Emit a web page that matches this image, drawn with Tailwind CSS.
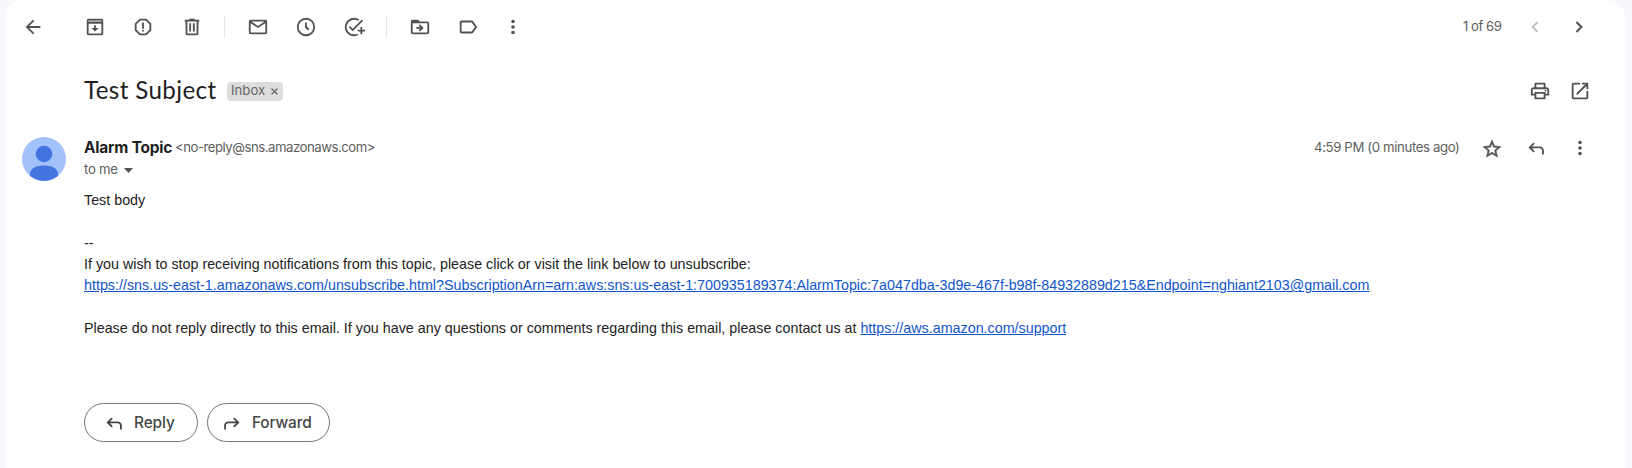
<!DOCTYPE html>
<html lang="en">
<head>
<meta charset="utf-8">
<title>Test Subject</title>
<script src="https://cdn.jsdelivr.net/npm/@tailwindcss/browser@4"></script>
</head>
<body class="bg-[#f6f8fc] h-[468px] overflow-hidden pl-[5px] pr-[7px] font-['Inter',sans-serif] text-[#5e5e5e]">
<main class="h-[468px] bg-white rounded-t-[18px] flex flex-col">
  <header class="h-[54px] shrink-0 flex items-center pl-[17px] pr-[35px] text-[#505351]">
    <svg class="size-[22px]" viewBox="0 0 24 24" fill="currentColor"><path d="M20 11H7.83l5.59-5.59L12 4l-8 8 8 8 1.41-1.41L7.83 13H20z"/></svg>
    <svg class="size-[22px] ml-[40px]" viewBox="0 0 24 24" fill="currentColor"><path d="M19 3H5a2 2 0 0 0-2 2v14a2 2 0 0 0 2 2h14a2 2 0 0 0 2-2V5a2 2 0 0 0-2-2zm0 2v1.500H5V5zM5 19V8.500h14V19z"/><path d="M5 5h14v2H5z" opacity=".5"/><path d="M13 10h-2v3H8l4 4 4-4h-3z"/></svg>
    <svg class="size-[22px] ml-[26px]" viewBox="0 0 24 24" fill="currentColor"><path d="M15.730 3H8.270L3 8.270v7.460L8.270 21h7.460L21 15.730V8.270zM19 14.900 14.900 19H9.100L5 14.900V9.100L9.100 5h5.800L19 9.100z"/><circle cx="12" cy="16" r="1.100"/><path d="M11 7h2v7h-2z"/></svg>
    <svg class="size-[22px] ml-[27px]" viewBox="0 0 24 24" fill="currentColor"><path d="M15 4V3H9v1H4v2h1v13a2 2 0 0 0 2 2h10a2 2 0 0 0 2-2V6h1V4zm2 15H7V6h10z"/><path d="M9 8h2v9H9zm4 0h2v9h-2z"/></svg>
    <span class="w-px h-[22px] ml-[21px] bg-[#e3e5ea]"></span>
    <svg class="size-[22px] ml-[22px]" viewBox="0 0 24 24" fill="currentColor"><path d="M20 4H4a2 2 0 0 0-2 2v12a2 2 0 0 0 2 2h16a2 2 0 0 0 2-2V6a2 2 0 0 0-2-2zm-.800 2L12 10.800 4.800 6zM4 18V7.870l8 5.330 8-5.330V18z"/></svg>
    <svg class="size-[22px] ml-[26px]" viewBox="0 0 24 24" fill="currentColor"><path d="M12 2a10 10 0 1 0 0 20 10 10 0 0 0 0-20zm0 18a8 8 0 1 1 0-16 8 8 0 0 1 0 16z"/><path d="M13 7h-2v5.410l3.300 3.300 1.410-1.420L13 11.580z"/></svg>
    <svg class="size-[22px] ml-[26px]" viewBox="0 0 24 24" fill="currentColor"><path d="M22 5.180 10.590 16.600l-4.240-4.240 1.410-1.410 2.830 2.830 10-10zM12 20a8 8 0 1 1 4.330-14.730l1.450-1.450A10 10 0 1 0 12 22c1.730 0 3.360-.440 4.780-1.220l-1.500-1.500c-1 .460-2.110.720-3.280.720zm7-5h-3v2h3v3h2v-3h3v-2h-3v-3h-2z"/></svg>
    <span class="w-px h-[22px] ml-[21px] bg-[#e3e5ea]"></span>
    <svg class="size-[22px] ml-[22px]" viewBox="0 0 24 24" fill="currentColor"><path d="M20 6h-8l-2-2H4a2 2 0 0 0-2 2v12a2 2 0 0 0 2 2h16a2 2 0 0 0 2-2V8a2 2 0 0 0-2-2zm0 12H4V8h16z"/><path d="M12.160 12H8v2h4.160l-1.590 1.590L11.990 17 16 13.010 11.990 9l-1.410 1.410z"/></svg>
    <svg class="size-[22px] ml-[26px]" viewBox="0 0 24 24" fill="currentColor"><path d="M17.630 5.840C17.270 5.330 16.670 5 16 5L5 5.010C3.900 5.010 3 5.900 3 7v10c0 1.100.9 1.990 2 1.990L16 19c.67 0 1.270-.33 1.630-.84L22 12zM16 17H5V7h11l3.550 5z"/></svg>
    <svg class="size-[22px] ml-[23px]" viewBox="0 0 24 24" fill="currentColor"><path d="M12 8a2 2 0 1 0 0-4 2 2 0 0 0 0 4zm0 2a2 2 0 1 0 0 4 2 2 0 0 0 0-4zm0 6a2 2 0 1 0 0 4 2 2 0 0 0 0-4z"/></svg>
    <span class="ml-auto w-[40px] whitespace-nowrap text-[13.200px] tracking-[-0.500px] word-spacing-1 text-[#5e5e5e]">1 of 69</span>
    <svg class="size-[22px] ml-[21px] text-[#b9bab9]" viewBox="0 0 24 24" fill="currentColor"><path d="M15.410 7.410 14 6l-6 6 6 6 1.410-1.410L10.830 12z"/></svg>
    <svg class="size-[22px] ml-[22px]" viewBox="0 0 24 24" fill="currentColor" stroke="currentColor" stroke-width=".4"><path d="M10 6 8.590 7.410 13.170 12l-4.580 4.590L10 18l6-6z"/></svg>
  </header>

  <section class="h-[74px] shrink-0 flex items-center pl-[79px] pr-[34px]">
    <h1 class="w-[143px] pb-[3px] whitespace-nowrap font-['Lato',sans-serif] text-[24.200px] leading-[30px] tracking-[0.360px] text-[#1f1f1f]">Test Subject</h1>
    <span class="h-[19px] w-[56px] rounded-[4px] bg-[#ddd] flex items-center pl-[4px] text-[13.200px] leading-none text-[#666]">Inbox
      <svg class="size-[7px] ml-[6px]" viewBox="0 0 7 7" fill="none" stroke="#666" stroke-width="1.200"><path d="m.5.500 6 6m0-6-6 6"/></svg>
    </span>
    <svg class="size-[22px] ml-auto text-[#505351]" viewBox="0 0 24 24" fill="currentColor"><path d="M19 8h-1V3H6v5H5c-1.660 0-3 1.340-3 3v6h4v4h12v-4h4v-6c0-1.660-1.340-3-3-3zM8 5h8v3H8zm8 14H8v-4h8zm2-4v-2H6v2H4v-4c0-.550.450-1 1-1h14c.550 0 1 .450 1 1v4z"/><circle cx="18" cy="11.500" r="1"/></svg>
    <svg class="size-[22px] ml-[18px] text-[#505351]" viewBox="0 0 24 24" fill="currentColor"><path d="M19 19H5V5h7V3H5a2 2 0 0 0-2 2v14a2 2 0 0 0 2 2h14a2 2 0 0 0 2-2v-7h-2zM14 3v2h3.590l-9.830 9.830 1.410 1.410L19 6.410V10h2V3z"/></svg>
  </section>

  <article class="flex pl-[17px] pr-[34px] pt-[9px]">
    <svg class="size-[44px] shrink-0" viewBox="0 0 44 44"><defs><clipPath id="face"><circle cx="22" cy="22" r="22"/></clipPath></defs><g clip-path="url(#face)"><path fill="#a1c2fa" d="M0 0h44v44H0z"/><circle cx="22" cy="17" r="8.300" fill="#4374e0"/><path fill="#4374e0" d="M8 44v-7c0-6 7-8.500 14-8.500s14 2.500 14 8.500v7z"/></g></svg>
    <div class="ml-[18px] grow">
      <div class="h-[22px] flex items-center">
        <span class="w-[91px] whitespace-nowrap text-[15.400px] font-bold tracking-[-0.170px] text-[#1f1f1f]">Alarm Topic</span>
        <span class="text-[13.200px] tracking-[-0.490px] whitespace-nowrap">&lt;no-reply@sns.amazonaws.com&gt;</span>
        <span class="ml-auto w-[145px] text-[13.200px] tracking-[-0.370px] whitespace-nowrap">4:59 PM (0 minutes ago)</span>
        <svg class="size-[22px] ml-[22px] mt-px text-[#505351]" viewBox="0 0 24 24" fill="currentColor" stroke="currentColor" stroke-width=".5"><path d="m22 9.240-7.190-.620L12 2 9.190 8.630 2 9.240l5.460 4.730L5.820 21 12 17.270 18.180 21l-1.630-7.030zM12 15.400l-3.760 2.270 1-4.280-3.320-2.880 4.380-.380L12 6.100l1.710 4.040 4.380.380-3.320 2.880 1 4.280z"/></svg>
        <svg class="size-[22px] ml-[22px] text-[#505351]" viewBox="0 0 24 24" fill="currentColor"><path d="M7.600 12.400 10.700 15.500 9.300 16.900 3.800 11.400 9.300 5.900l1.400 1.400-3.100 3.100H16c2.700 0 4.600 1.900 4.600 4.600V19h-2v-4c0-1.600-1-2.600-2.600-2.600z"/></svg>
        <svg class="size-[22px] ml-[22px] text-[#505351]" viewBox="0 0 24 24" fill="currentColor"><path d="M12 8a2 2 0 1 0 0-4 2 2 0 0 0 0 4zm0 2a2 2 0 1 0 0 4 2 2 0 0 0 0-4zm0 6a2 2 0 1 0 0 4 2 2 0 0 0 0-4z"/></svg>
      </div>
      <div class="h-[22px] flex items-center text-[13.200px]">
        <span class="w-[40px] whitespace-nowrap tracking-[-0.300px]">to me</span>
        <svg class="w-[9px] h-[5px]" viewBox="0 0 9 5"><path fill="#505351" d="M0 0h9L4.500 5z"/></svg>
      </div>
      <div class="mt-[8.600px] font-['Liberation_Sans',Arial,sans-serif] text-[14.300px] leading-[21.450px] text-[#222] whitespace-nowrap">
        <p>Test body</p>
        <br>
        <p>--</p>
        <p>If you wish to stop receiving notifications from this topic, please click or visit the link below to unsubscribe:</p>
        <p><a class="text-[#1155cc] underline">https://sns.us-east-1.amazonaws.com/unsubscribe.html?SubscriptionArn=arn:aws:sns:us-east-1:700935189374:AlarmTopic:7a047dba-3d9e-467f-b98f-84932889d215&amp;Endpoint=nghiant2103@gmail.com</a></p>
        <br>
        <p>Please do not reply directly to this email. If you have any questions or comments regarding this email, please contact us at <a class="text-[#1155cc] underline">https://aws.amazon.com/support</a></p>
      </div>
      <div class="mt-[63.400px] flex gap-[9px] text-[15.400px] font-medium text-[#444746]">
        <button class="w-[114px] h-[39px] rounded-full border border-[#747775] flex items-center pl-[18px]">
          <svg class="size-[22px]" viewBox="0 0 24 24" fill="currentColor"><path d="M7.600 12.400 10.700 15.500 9.300 16.900 3.800 11.400 9.300 5.900l1.400 1.400-3.100 3.100H16c2.700 0 4.600 1.900 4.600 4.600V19h-2v-4c0-1.600-1-2.600-2.600-2.600z"/></svg>
          <span class="ml-[9px] tracking-[-0.100px]">Reply</span>
        </button>
        <button class="w-[123px] h-[39px] rounded-full border border-[#747775] flex items-center pl-[13px]">
          <svg class="size-[22px] -scale-x-100" viewBox="0 0 24 24" fill="currentColor"><path d="M7.600 12.400 10.700 15.500 9.300 16.900 3.800 11.400 9.300 5.900l1.400 1.400-3.100 3.100H16c2.700 0 4.600 1.900 4.600 4.600V19h-2v-4c0-1.600-1-2.600-2.600-2.600z"/></svg>
          <span class="ml-[9px] tracking-[-0.150px]">Forward</span>
        </button>
      </div>
    </div>
  </article>
</main>
</body>
</html>
